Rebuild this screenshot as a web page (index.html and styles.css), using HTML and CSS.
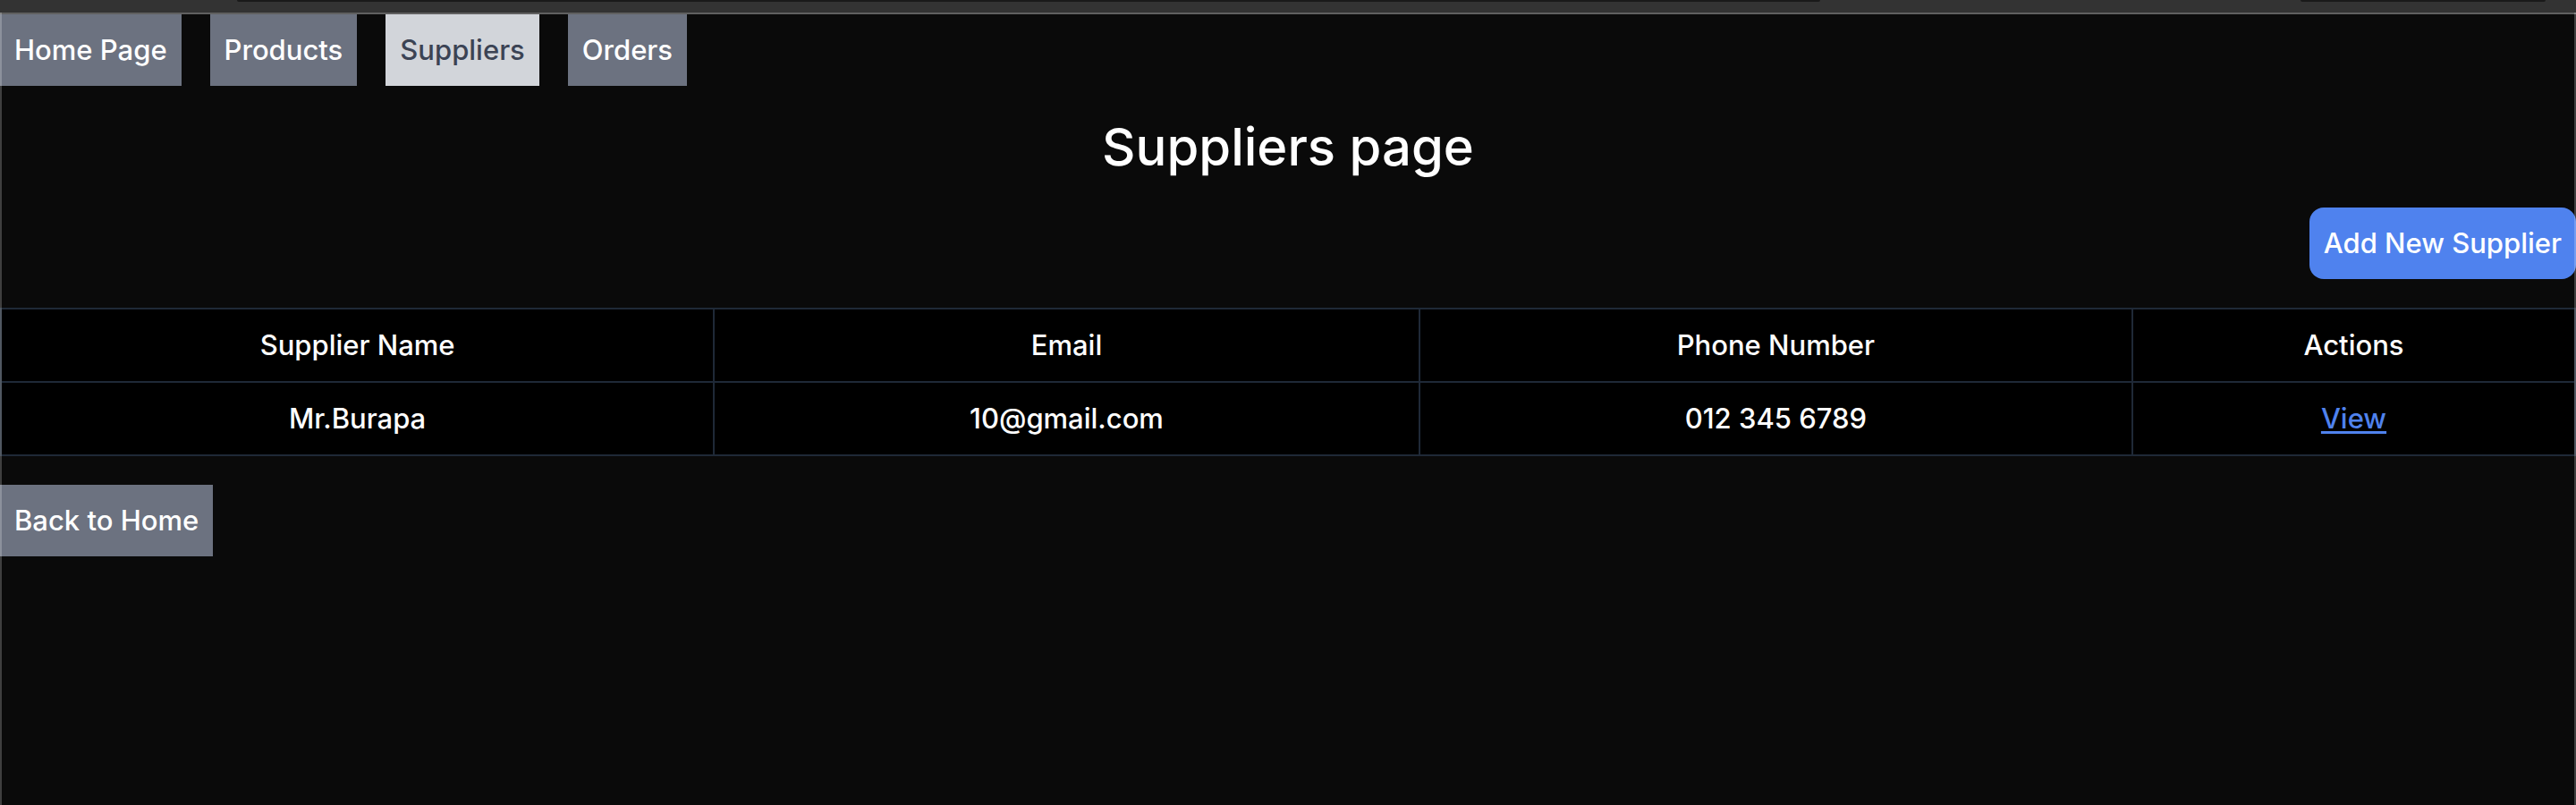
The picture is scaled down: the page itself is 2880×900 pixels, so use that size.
FILE: index.html
```html
<!DOCTYPE html>
<html lang="en">
<head>
<meta charset="utf-8">
<title>Suppliers page</title>
<link rel="stylesheet" href="styles.css">
</head>
<body>
<div class="window">
  <div class="toolbar" aria-hidden="true">
    <div class="toolbar-field"></div>
    <div class="toolbar-group"></div>
  </div>
  <nav class="nav">
    <a class="tab" href="#home">Home Page</a>
    <a class="tab" href="#products">Products</a>
    <a class="tab tab-current" href="#suppliers" aria-current="page">Suppliers</a>
    <a class="tab" href="#orders">Orders</a>
  </nav>
  <main class="content">
    <h1 class="title">Suppliers page</h1>
    <button class="add" type="button">Add New Supplier</button>
    <table class="table">
      <colgroup>
        <col class="col-name"><col class="col-email"><col class="col-phone"><col class="col-actions">
      </colgroup>
      <thead>
        <tr><th scope="col">Supplier Name</th><th scope="col">Email</th><th scope="col">Phone Number</th><th scope="col">Actions</th></tr>
      </thead>
      <tbody>
        <tr><td>Mr.Burapa</td><td>10@gmail.com</td><td>012 345 6789</td><td><a class="view" href="#view">View</a></td></tr>
      </tbody>
    </table>
    <a class="tab back" href="#home">Back to Home</a>
  </main>
</div>
</body>
</html>
```
FILE: styles.css
```css
* { box-sizing: border-box; }

body {
  margin: 0;
  background: #0a0a0a;
  color: #fff;
  font: 450 31px/48px Inter, "Liberation Sans", sans-serif;
}

.window { position: relative; min-height: 100vh; }

/* translucent window edge, drawn over the content */
.window::after {
  content: "";
  position: absolute;
  inset: 14px 0 0;
  border: solid rgba(255, 255, 255, 0.22);
  border-width: 0 2px;
  pointer-events: none;
}

.toolbar {
  display: grid;
  grid-template-columns: 265fr 1770fr 537fr 274fr 34fr;
  height: 16px;
  background: #333;
  border-bottom: 2px solid #606060;
}

.toolbar-field,
.toolbar-group {
  height: 2px;
  background: #1a1a1a;
  border-radius: 0 0 10px 10px;
}

.toolbar-field { grid-column: 2; }
.toolbar-group { grid-column: 4; }

.nav { display: flex; gap: 32px; }

.tab {
  padding: 16px;
  background: #6c7280;
  color: #fff;
  text-decoration: none;
}

.tab-current { background: #d2d5da; color: #3b4354; }

.content {
  display: flex;
  flex-direction: column;
  align-items: flex-start;
  gap: 32px;
  padding-top: 32px;
}

.title {
  align-self: center;
  margin: 0;
  font-size: 58px;
  font-weight: 550;
  line-height: 72px;
}

.add {
  align-self: flex-end;
  padding: 16px;
  border: 0;
  border-radius: 16px;
  background: #4f82ee;
  color: #fff;
  font: inherit;
}

.table {
  width: 100%;
  table-layout: fixed;
  border-collapse: collapse;
  background: #000;
  text-align: center;
}

.col-name, .col-phone { width: 27.7%; }
.col-email { width: 27.4%; }
.col-actions { width: 17.2%; }

.table th,
.table td { padding: 16px; border: 2px solid #1f2937; }

.table th { font-weight: 550; }

.view {
  color: #4f82ee;
  text-decoration-thickness: 3px;
  text-underline-offset: 3px;
}
```
